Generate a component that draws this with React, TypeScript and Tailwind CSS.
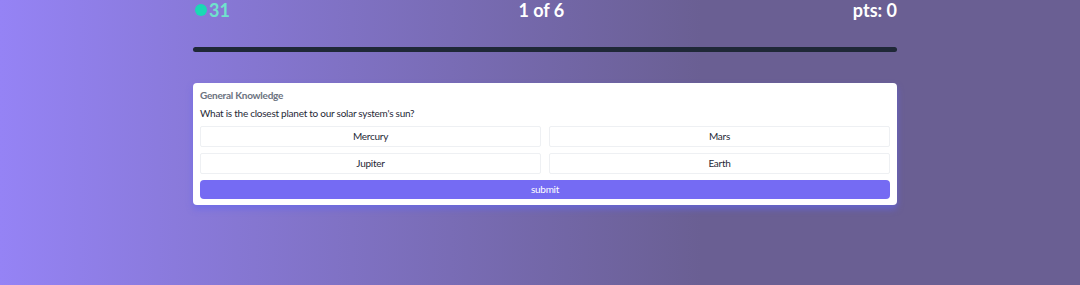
import React from "react";

export default function App() {
  const answers = ["Mercury", "Mars", "Jupiter", "Earth"];
  return (
    <div
      className="w-[1080px] h-[285px] overflow-hidden bg-linear-to-r from-[#9583f5] from-0% to-[#6a5f93] to-65%"
      style={{ fontFamily: 'Lato, "Open Sans", sans-serif' }}
    >
      <div className="w-[704px] ml-[193px] -mt-[3px]">
        <div className="flex items-center justify-between h-[26px] text-[18px] font-bold leading-[26px]">
          <div className="flex items-center gap-[2px]">
            <span className="w-[12px] h-[12px] rounded-full bg-[#19d9b4] inline-block ml-[2px]" />
            <span className="text-[#6fe3cc]">31</span>
          </div>
          <div className="text-white">1 of 6</div>
          <div className="text-white">pts: 0</div>
        </div>
        <div className="mt-[24px] h-[5px] rounded-full bg-[#1f2837]" />
        <div className="mt-[31px] bg-white rounded-[4px] px-[7px] pt-[5px] pb-[6px] shadow-[0_4px_6px_rgba(99,102,241,0.6)] tracking-[-0.25px]">
          <div className="text-[10px] font-bold text-[#6b7280] leading-[14px]">General Knowledge</div>
          <div className="mt-[4px] text-[10px] text-[#1f2937] leading-[14px]">
            What is the closest planet to our solar system's sun?
          </div>
          <div className="mt-[6px] grid grid-cols-2 gap-x-[8px] gap-y-[6px]">
            {answers.map((a) => (
              <button
                key={a}
                className="h-[21px] border border-[#eef0f3] rounded-[2px] bg-white text-[10px] text-[#1f2937] flex items-center justify-center"
              >
                {a}
              </button>
            ))}
          </div>
          <button className="mt-[6px] w-full h-[19px] rounded-[4px] bg-[#756bf3] text-white text-[10px] flex items-center justify-center">
            submit
          </button>
        </div>
      </div>
    </div>
  );
}
